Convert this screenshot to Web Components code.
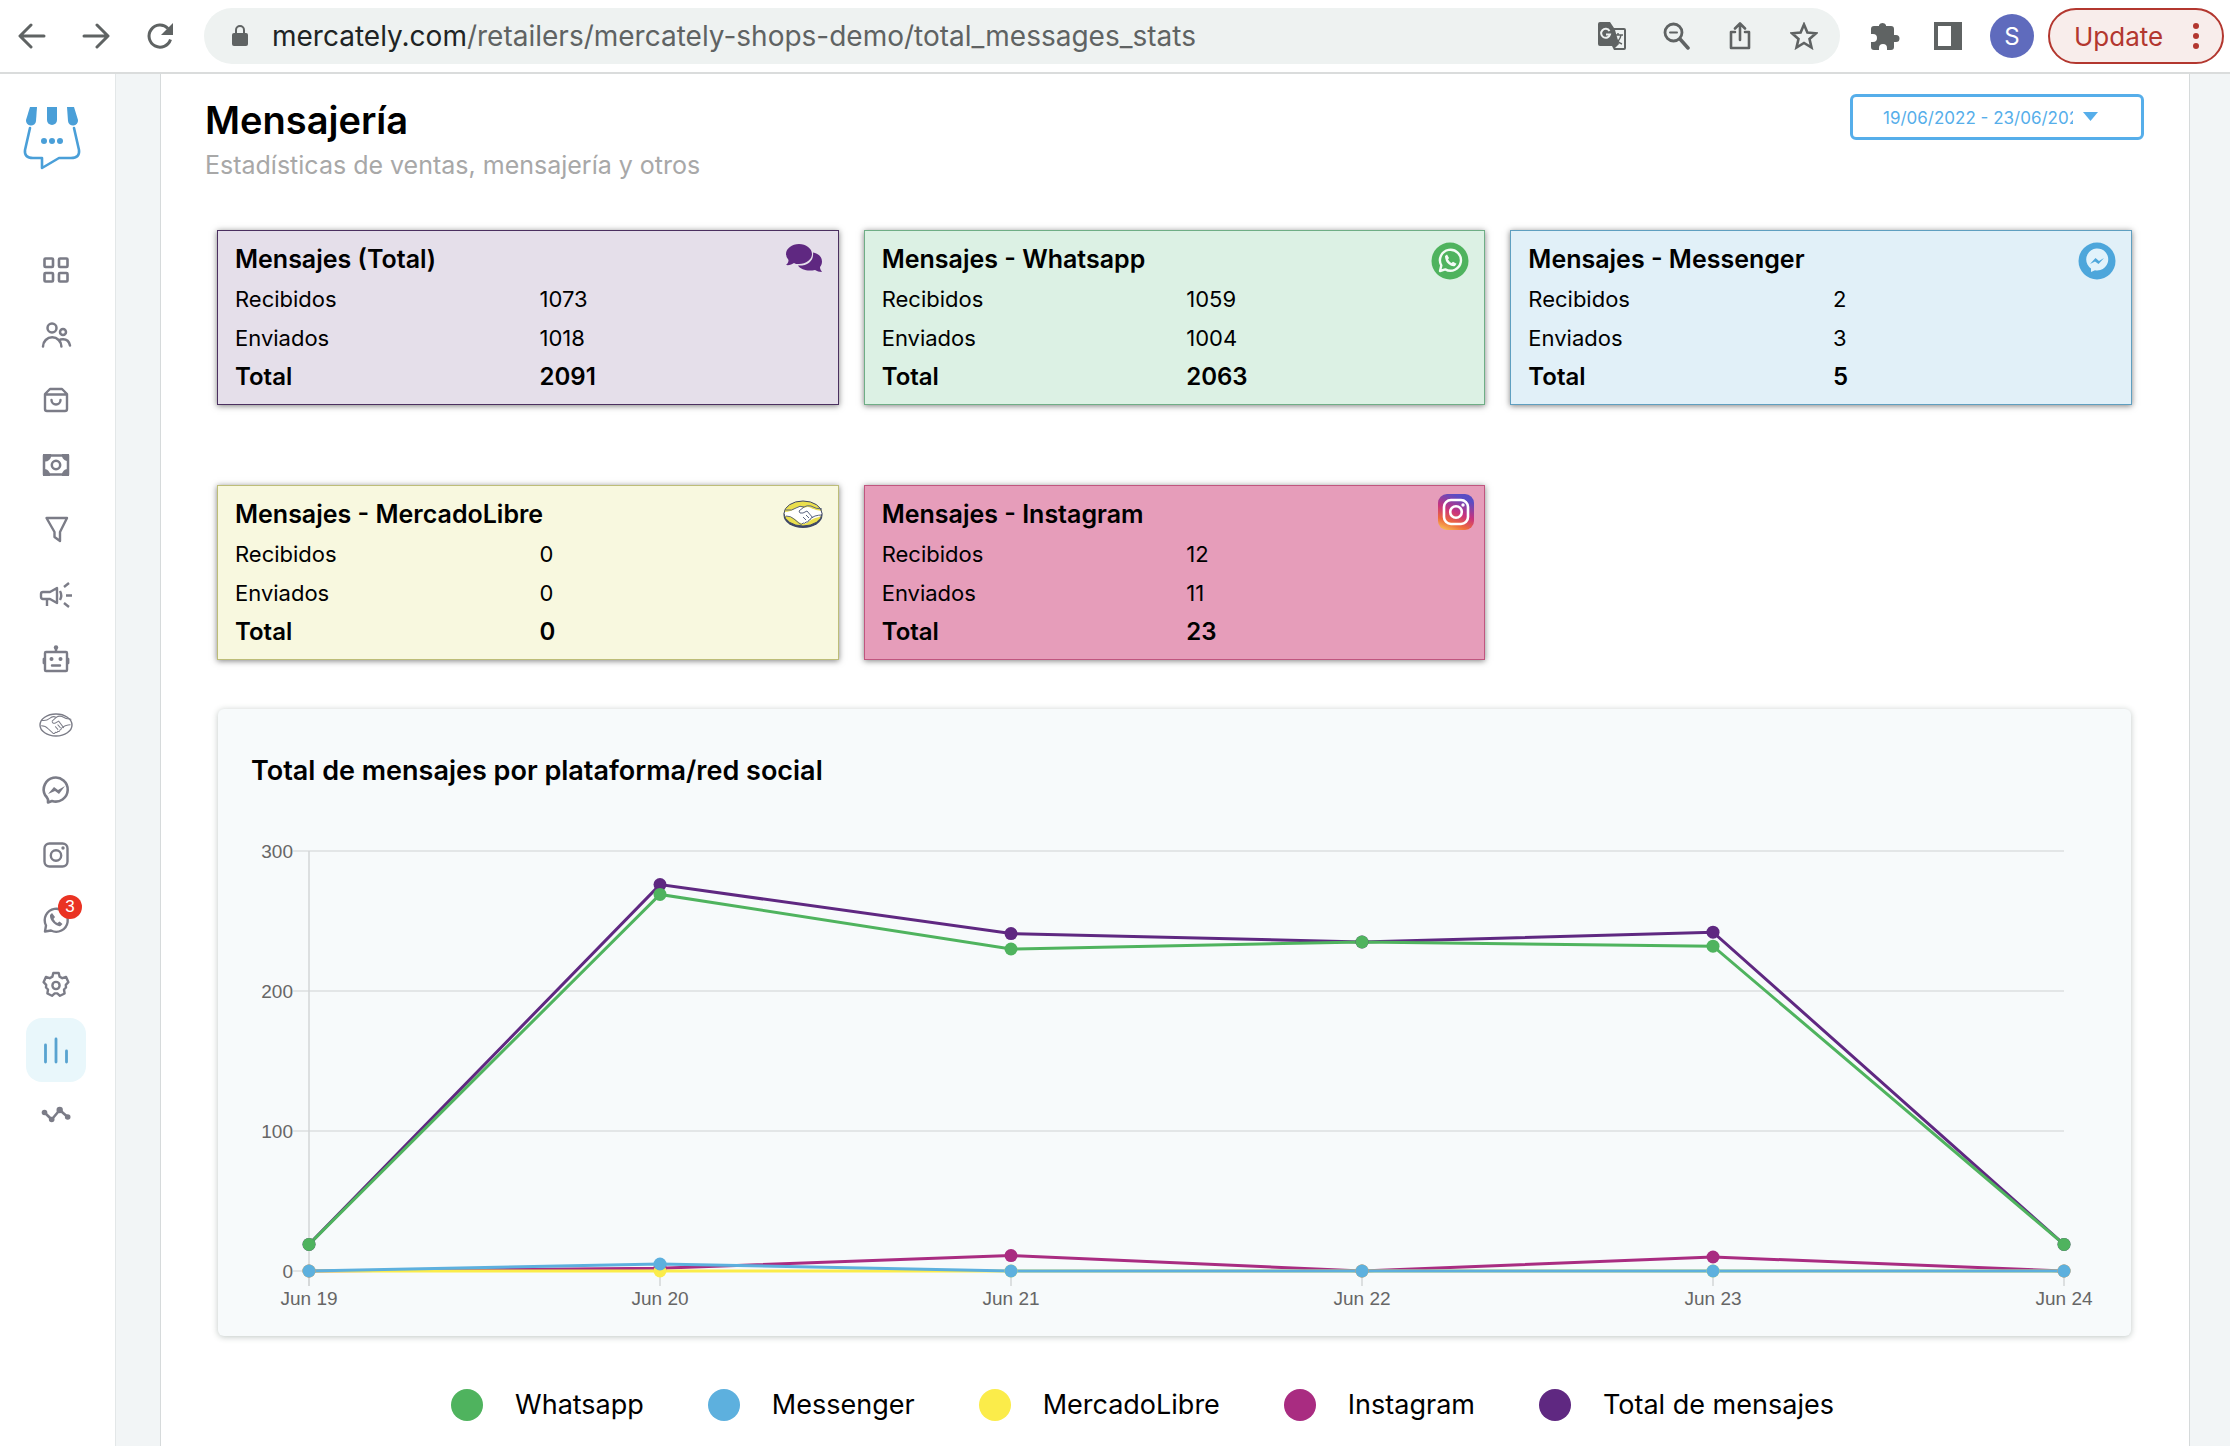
<!DOCTYPE html>
<html lang="es">
<head>
<meta charset="utf-8">
<title>Mensajería</title>
<style>
  body { margin: 0; background: #fff; color: #000; font-family: Inter, "Liberation Sans", sans-serif; }
</style>
</head>
<body>
<app-shell>
  <browser-bar slot="bar" host="mercately.com" path="/retailers/mercately-shops-demo/total_messages_stats"></browser-bar>
  <side-nav slot="nav"></side-nav>
  <page-header>
    <span slot="title">Mensajería</span>
    <span slot="subtitle">Estadísticas de ventas, mensajería y otros</span>
    <date-range slot="action" value="19/06/2022 - 23/06/2022"></date-range>
  </page-header>
  <card-grid>
    <stat-card tone="total" received="1073" sent="1018" total="2091">Mensajes (Total)</stat-card>
    <stat-card tone="whatsapp" received="1059" sent="1004" total="2063">Mensajes - Whatsapp</stat-card>
    <stat-card tone="messenger" received="2" sent="3" total="5">Mensajes - Messenger</stat-card>
    <stat-card tone="mercado" received="0" sent="0" total="0">Mensajes - MercadoLibre</stat-card>
    <stat-card tone="instagram" received="12" sent="11" total="23">Mensajes - Instagram</stat-card>
  </card-grid>
  <line-chart>Total de mensajes por plataforma/red social</line-chart>
  <chart-legend>
    <legend-item color="#4fb35e">Whatsapp</legend-item>
    <legend-item color="#5db0de">Messenger</legend-item>
    <legend-item color="#fbec4a">MercadoLibre</legend-item>
    <legend-item color="#a92c81">Instagram</legend-item>
    <legend-item color="#5f2881">Total de mensajes</legend-item>
  </chart-legend>
</app-shell>

<script>
const S = 'fill="none" stroke="currentColor" stroke-linecap="round" stroke-linejoin="round"';
const HANDS = `<path d="M3 12q6 1 10-2q4-3 8-1q3-2 7-1q5 3 11 3"/><path d="M3 18q5 0 8 3l6 5q2 1 3-1q2 1 3-1q2 1 3-2q2 0 2-2q2-1 4-2q4-1 6-1"/><path d="M21 9l-5 4q0 3 4 2l4-2l6 7M23 22l-3-3M26 20l-3-3"/>`;
const ICONS = {
  back: [28, 28, `<path ${S} stroke-width="3" d="M26 14H3M13 3L2 14l11 11"/>`],
  forward: [28, 28, `<path ${S} stroke-width="3" d="M2 14h23M15 3l11 11-11 11"/>`],
  reload: [28, 28, `<path fill="none" stroke="currentColor" stroke-width="3" d="M24.500 17.500A11 11 0 1 1 22 6.500"/><path fill="currentColor" d="M27 1v12H15z"/>`],
  lock: [20, 24, `<rect x="2" y="9" width="16" height="13" rx="2" fill="currentColor"/><path fill="none" stroke="currentColor" stroke-width="2" d="M6 10V6a4 4 0 0 1 8 0v4"/>`],
  translate: [28, 28, `<path fill="currentColor" d="M2 0h10l4 6h10a2 2 0 0 1 2 2v18a2 2 0 0 1-2 2H16l-2-4H2a2 2 0 0 1-2-2V2a2 2 0 0 1 2-2z"/><path fill="#eef2f1" d="M17 8h9v18h-9l4-4z"/><path fill="none" stroke="#eef2f1" stroke-width="2" d="M11.500 9A4.500 4.500 0 1 0 12 12.500H8"/><path fill="none" stroke="currentColor" stroke-width="1.500" d="M15 13h10M20 11v2M23 13q-1 6-7 9M17 15q2 5 7 7"/>`],
  zoomout: [28, 28, `<circle cx="11.500" cy="10.500" r="8.500" fill="none" stroke="currentColor" stroke-width="2.800"/><path ${S} stroke-width="2" d="M8 10.500h7"/><path ${S} stroke-width="3.500" d="M18 17l8 9"/>`],
  share: [28, 28, `<path ${S} stroke-width="2.600" d="M9 10H5v16h18V10h-4M14 18V2M9 6.500l5-5 5 5"/>`],
  star: [28, 28, `<path fill="none" stroke="currentColor" stroke-width="2.600" d="M14 2.500l3.400 8 8.600.8-6.500 5.700 2 8.500-7.500-4.500-7.500 4.500 2-8.500L2 11.300l8.600-.8z"/>`],
  puzzle: [30, 30, `<path fill="currentColor" d="M26 14h-2V8a3 3 0 0 0-3-3h-5V4a4 4 0 0 0-7 0v1H4a3 3 0 0 0-3 3v5h2a4 4 0 0 1 0 8H1v5a3 3 0 0 0 3 3h5v-2a4 4 0 0 1 8 0v2h4a3 3 0 0 0 3-3v-5h2a3.500 3.500 0 0 0 0-7z"/>`],
  panel: [28, 28, `<path fill="currentColor" fill-rule="evenodd" d="M0 0h28v28H0zM4 4v20h13V4z"/>`],
  dots: [6, 26, `<g fill="currentColor"><circle cx="3" cy="3" r="3"/><circle cx="3" cy="13" r="3"/><circle cx="3" cy="23" r="3"/></g>`],
  logo: [58, 64, `<g fill="#4a9fd8"><path d="M7 1h7l-1 14a4.800 4.800 0 0 1-10-1z"/><path d="M24 1h10v13a5 5 0 0 1-10 0z"/><path d="M44 1h7l4 13a4.800 4.800 0 0 1-10 1z"/><circle cx="21" cy="35" r="3"/><circle cx="29" cy="35" r="3"/><circle cx="37" cy="35" r="3"/></g><path fill="none" stroke="#4a9fd8" stroke-width="2.600" stroke-linecap="round" stroke-linejoin="round" d="M7 22L2 44q-1 8 8 8h9v10l17-10h12q9 0 8-8L51 22"/>`],
  grid: [36, 36, `<g ${S} stroke-width="2.600"><rect x="6.500" y="6.500" width="8.500" height="8.500" rx="1"/><rect x="21" y="6.500" width="8.500" height="8.500" rx="1"/><rect x="6.500" y="21" width="8.500" height="8.500" rx="1"/><rect x="21" y="21" width="8.500" height="8.500" rx="1"/></g>`],
  people: [36, 36, `<g ${S} stroke-width="2.500"><circle cx="14" cy="11" r="4.500"/><circle cx="25" cy="15" r="3"/><path d="M5 29.500a9.200 9.200 0 0 1 18.400 0M22.500 22.500q8-1.500 9.500 6"/></g>`],
  bag: [36, 36, `<g ${S} stroke-width="2.400"><path d="M7 12l5-5h12l5 5v15q0 2-2 2H9q-2 0-2-2zM7 12.500h22M13.500 18a4.500 4.500 0 0 0 9 0"/></g>`],
  money: [36, 36, `<rect x="6" y="8.500" width="24" height="19" ${S} stroke-width="2.500"/><path fill="currentColor" d="M5 7h8a6 6 0 0 1-8 7zM31 7v7a6 6 0 0 1-7-7zM5 29v-7a6 6 0 0 1 7 7zM31 29h-7a6 6 0 0 1 7-7z"/><circle cx="18" cy="18" r="4.200" ${S} stroke-width="2.500"/>`],
  funnel: [36, 36, `<path ${S} stroke-width="2.400" d="M8.500 6h20.500l-7 14v9l-5.500-4v-5z"/>`],
  horn: [36, 36, `<g fill="none" stroke="currentColor" stroke-width="2.400"><path stroke-linejoin="round" d="M19 11v15l-7-4H5q-2 0-2-2v-3q0-2 2-2h7zM9 22v7M22 14q2.500 4.500 0 9M26 10l5-4M28 18.500h6M26 26l5 4"/></g>`],
  robot: [36, 36, `<g ${S} stroke-width="2.400"><rect x="7" y="10" width="22" height="19" rx="1"/><path d="M18 9V6M5.800 17v4M30.200 17v4M14 23.500h8"/></g><g fill="currentColor"><circle cx="18" cy="5.500" r="2.200"/><circle cx="13.500" cy="17" r="2"/><circle cx="22.500" cy="17" r="2"/></g>`],
  hands: [36, 36, `<ellipse cx="18" cy="18" rx="16" ry="11" ${S} stroke-width="1.400"/><g transform="translate(1 2) scale(.82 .93)" ${S} stroke-width="1.100">${HANDS}</g>`],
  messenger: [36, 36, `<path ${S} stroke-width="2.600" d="M10 27.500v3l4-1.500a12 12 0 1 0-7-6q2 2 3 4.500z"/><path fill="currentColor" d="M10 22l6-7 4 3 7-4-6 8-4-3z"/>`],
  instagram: [36, 36, `<g ${S} stroke-width="2.400"><rect x="6.500" y="6.500" width="23" height="23" rx="5"/><circle cx="18" cy="18.500" r="5.200"/></g><circle cx="25" cy="11" r="1.700" fill="currentColor"/>`],
  whatsapp: [36, 36, `<path ${S} stroke-width="2.400" d="M7 29.500l1-6a11.500 11.500 0 1 1 5 5z"/><path fill="currentColor" d="M12 13l2-2 3 4-1.500 2q1.500 3 4 4l2-1.500 3 2.500-2 2q-3 1-7-3t-3.500-8z"/>`],
  gear: [36, 36, `<path ${S} stroke-width="2.400" d="M15.300 6h5.400l.9 3.600 2.700 1.600 3.800-1.200 2.300 5.200-2.600 2.700.2 2.600-2 2 .6 4-4.600 2.300-2.700-2.400h-2.600l-2.700 2.400-4.600-2.300.6-4-2-2 .2-2.600-2.600-2.700L7.900 10l3.800 1.200 2.700-1.600z"/><circle cx="18" cy="18.500" r="3.600" ${S} stroke-width="2.400"/>`],
  bars: [36, 36, `<path ${S} stroke-width="2.800" d="M7.500 13v17M18 7v23M28.500 19v11"/>`],
  trend: [36, 36, `<path ${S} stroke-width="2.600" d="M6.500 15.500l7.200 7 8-9.500 8 7"/><g fill="currentColor"><circle cx="6.500" cy="15.500" r="2.800"/><circle cx="13.700" cy="22.500" r="2.800"/><circle cx="21.700" cy="13" r="3.200"/><circle cx="29.700" cy="20" r="2.800"/></g>`],
  cTotal: [38, 38, `<g fill="#5f2881"><path d="M28 10.500c5 1 9 4 9 9 0 2.500-1 4.500-2 5.500 0 2 1 3.500 2 5-3 0-5-1-7-2-7 1.500-14 0-17-4.500 9 .5 16-4 15-13z"/><path d="M14 2c7 0 13 4.500 13 10s-6 10-13 10c-2 0-4 0-5-1-2 1.500-5 2.500-8 2 2-1.500 2.500-3.500 2.500-5Q1 15 1 12C1 6.500 7 2 14 2z"/></g>`],
  cWhatsapp: [38, 38, `<circle cx="19" cy="19" r="18.500" fill="#4fb35e"/><path fill="none" stroke="#f3fbf5" stroke-width="2.400" stroke-linejoin="round" d="M9 29l1.300-5.600a10.500 10.500 0 1 1 4 4z"/><path fill="#f3fbf5" d="M14 14l2-1.500 2 3.500-1 1.500q1.500 2.500 3.500 3.500l1.500-1.300 3.500 2-1.500 2.300q-3 1-6.500-2t-3.500-8z"/>`],
  cMessenger: [38, 38, `<circle cx="19" cy="19" r="18.500" fill="#4da6db"/><path fill="#e1f2fb" d="M13 30v-3.500a11 11 0 1 1 4 1.700z"/><path fill="#4da6db" d="M12 22l5.500-6 3.500 3 5-3-5.500 6-3.500-2.500z"/>`],
  cMercado: [40, 38, `<ellipse cx="20" cy="18" rx="19.500" ry="13" fill="#3d4666"/><g transform="translate(0 -2)"><ellipse cx="20" cy="18.500" rx="19" ry="12.500" fill="#eadf4e"/><path fill="#fff" d="M1 17q7 0 12-4 4-2 8 0 4-2 7 0 6 3 11 3 1 5-3 6-5 1-8 3-3 3-8 4-4-1-8-5-4-3-10-3z"/><g fill="none" stroke="#5b6580" stroke-width="1">${HANDS.replace(/d="/g, 'transform="translate(0 3)" d="')}</g><ellipse cx="20" cy="18.500" rx="19" ry="12.500" fill="none" stroke="#3d4666"/></g>`],
  cInstagram: [38, 38, `<defs><linearGradient id="g" x1="0" y1="1" x2=".4" y2="0"><stop offset="0" stop-color="#fbd05a"/><stop offset=".3" stop-color="#ee6a3c"/><stop offset=".6" stop-color="#c8327e"/><stop offset="1" stop-color="#5a4cc4"/></linearGradient></defs><rect x="1" y="1" width="36" height="36" rx="9" fill="url(#g)"/><g fill="none" stroke="#fff" stroke-width="2.600"><rect x="7" y="7" width="24" height="24" rx="7"/><circle cx="19" cy="19" r="5.800"/></g><circle cx="26" cy="12" r="1.700" fill="#fff"/>`],
};

function define(name, css, html, setup) {
  customElements.define(name, class extends HTMLElement {
    constructor() {
      super();
      this.attachShadow({ mode: 'open' });
    }
    connectedCallback() {
      this.shadowRoot.innerHTML = `<style>${css}</style>` + (typeof html === 'function' ? html(this) : html);
      if (setup) setup(this);
    }
  });
}

define('app-icon', `:host{display:inline-flex;flex:none} svg{display:block}`, el => {
  const [w, h, body] = ICONS[el.getAttribute('name')];
  return `<svg width="${w}" height="${h}" viewBox="0 0 ${w} ${h}" aria-hidden="true">${body}</svg>`;
});

define('app-shell', `
  :host{display:flex;flex-direction:column;min-height:100vh}
  .body{display:flex;flex:1}
  aside{flex:none;width:115px;border-right:1px solid #e3e7e8;background:#fff}
  .backdrop{flex:1;background:#f2f5f6;padding:0 40px 0 44px;display:flex}
  main{flex:1;min-width:0;box-sizing:border-box;background:#fff;border:solid #d6dadb;border-width:0 1px;padding:20px 45px 0 44px}
`, `<slot name="bar"></slot><div class="body"><aside><slot name="nav"></slot></aside><div class="backdrop"><main><slot></slot></main></div></div>`);

const btn = (n, label) => `<button aria-label="${label}"><app-icon name="${n}"></app-icon></button>`;
define('browser-bar', `
  :host{display:flex;align-items:center;height:72px;padding:0 6px 0 18px;border-bottom:2px solid #dadcdc;background:#fff;color:#5f6363}
  button{display:flex;border:0;padding:0;background:none;color:inherit;font:inherit}
  .group{display:flex;align-items:center;gap:36px}
  .omnibox{flex:1;display:flex;align-items:center;gap:22px;height:56px;box-sizing:border-box;margin:0 30px;padding:0 22px 0 26px;border-radius:28px;background:#eef2f1}
  .url{flex:1;font-size:28px;white-space:nowrap}
  .host{color:#202424}
  .end{display:flex;align-items:center;gap:14px}
  .tools{gap:34px;margin-right:14px}
  .avatar{width:44px;height:44px;border-radius:22px;background:#5f6bbd;color:#fff;font-size:24px;align-items:center;justify-content:center}
  .update{box-sizing:border-box;width:176px;height:56px;border:2px solid #b3372f;border-radius:28px;background:#f8edeb;color:#b3372f;font-size:26px;align-items:center;justify-content:space-between;padding:0 23px 0 24px}
`, el => `
  <div class="group">${btn('back', 'Back')}${btn('forward', 'Forward')}${btn('reload', 'Reload')}</div>
  <div class="omnibox"><app-icon name="lock"></app-icon>
    <div class="url"><span class="host">${el.getAttribute('host')}</span><span>${el.getAttribute('path')}</span></div>
    <div class="group">${btn('translate', 'Translate')}${btn('zoomout', 'Zoom')}${btn('share', 'Share')}${btn('star', 'Bookmark')}</div>
  </div>
  <div class="end"><div class="group tools">${btn('puzzle', 'Extensions')}${btn('panel', 'Side panel')}</div>
    <button class="avatar">S</button>
    <button class="update">Update<app-icon name="dots"></app-icon></button>
  </div>`);

define('side-nav', `
  :host{display:block;padding:32px 0 0}
  .logo{display:block;width:58px;height:64px;margin:0 0 68px 23px}
  nav{display:flex;flex-direction:column;gap:1px;padding-left:26px}
  nav a{position:relative;display:flex;align-items:center;justify-content:center;width:60px;height:64px;border-radius:16px;color:#7b7c87}
  nav a.active{background:#e9f7fb;color:#58a3d0}
  b{position:absolute;top:7px;right:4px;width:24px;height:24px;border-radius:12px;background:#ea3323;color:#fff;font:17px/24px "Liberation Sans",sans-serif;text-align:center}
`, () => `<a class="logo" href="#" aria-label="Inicio"><app-icon name="logo"></app-icon></a><nav>` +
  ['grid', 'people', 'bag', 'money', 'funnel', 'horn', 'robot', 'hands', 'messenger', 'instagram', 'whatsapp', 'gear', 'bars', 'trend']
    .map(n => `<a href="#${n}" aria-label="${n}"${n === 'bars' ? ' class="active"' : ''}><app-icon name="${n}"></app-icon>${n === 'whatsapp' ? '<b>3</b>' : ''}</a>`).join('') + `</nav>`);

define('page-header', `
  :host{display:flex;justify-content:space-between;align-items:flex-start}
  h1{margin:0;font-size:38px;line-height:53px;font-weight:600}
  p{margin:0;font-size:25px;line-height:36px;color:#a8a8a8}
`, `<div><h1><slot name="title"></slot></h1><p><slot name="subtitle"></slot></p></div><slot name="action"></slot>`);

define('date-range', `
  :host{display:flex;align-items:center;gap:10px;box-sizing:border-box;width:294px;height:46px;border:3px solid #56aeea;border-radius:6px;color:#56aeea;padding-left:30px}
  input{width:190px;border:0;padding:2px 0 0;background:none;color:inherit;font:17px/24px Inter,sans-serif;outline:0}
  svg{display:block;margin-bottom:2px}
`, el => `<input type="text" readonly aria-label="Rango de fechas" value="${el.getAttribute('value')}"><svg width="15" height="9"><path fill="currentColor" d="M0 0h15L7.500 9z"/></svg>`);

define('card-grid', `
  :host{display:grid;grid-template-columns:repeat(3,minmax(0,1fr));gap:80px 25px;margin:47px 12px 0}
`, `<slot></slot>`);

const TONES = {
  total: ['#e5dfea', '#4b3060', 'cTotal'],
  whatsapp: ['#dcf1e4', '#6fae86', 'cWhatsapp'],
  messenger: ['#e1f0f8', '#5f9fc0', 'cMessenger'],
  mercado: ['#f8f8df', '#bdbd78', 'cMercado'],
  instagram: ['#e69dba', '#c0567f', 'cInstagram'],
};
define('stat-card', `
  :host{display:flex;align-items:flex-start;position:relative;box-sizing:border-box;border:1px solid var(--edge);background:var(--fill);padding:9px 17px 8px;box-shadow:0 1px 6px rgba(0,0,0,.5)}
  table{width:100%;table-layout:fixed;border-collapse:collapse;font-size:22px;line-height:37px}
  caption{text-align:left;font-size:25px;line-height:39px;font-weight:600}
  th{width:52%} th,td{padding:2px 0 0;text-align:left;font-weight:400}
  .sum th,.sum td{padding:0;font-size:24px;line-height:39px;font-weight:600}
  app-icon{position:absolute;right:15px;top:11px}
  :host([tone="instagram"]) app-icon{right:9px;top:7px}
`, el => {
  const row = (l, a, c) => `<tr class="${c}"><th scope="row">${l}</th><td>${el.getAttribute(a)}</td></tr>`;
  return `<table><caption><slot></slot></caption><tbody>${row('Recibidos', 'received', '')}${row('Enviados', 'sent', '')}${row('Total', 'total', 'sum')}</tbody></table><app-icon name="${TONES[el.getAttribute('tone')][2]}"></app-icon>`;
}, el => {
  const t = TONES[el.getAttribute('tone')];
  el.style.setProperty('--fill', t[0]);
  el.style.setProperty('--edge', t[1]);
});

const SERIES = [
  ['#5f2881', [19, 276, 241, 235, 242, 19]],
  ['#a92c81', [0, 2, 11, 0, 10, 0]],
  ['#fbec4a', [0, 0, 0, 0, 0, 0]],
  ['#5db0de', [0, 5, 0, 0, 0, 0]],
  ['#4fb35e', [19, 269, 230, 235, 232, 19]],
];
define('line-chart', `
  :host{display:block;margin:49px 13px 0;border-radius:6px;background:#f7fafb;box-shadow:0 1px 6px rgba(60,80,70,.32);padding:42px 0 0;overflow:hidden}
  h2{margin:0;padding:0 33px;font-size:27px;line-height:40px;font-weight:600}
  svg{display:block;width:100%;height:auto}
  text{font:19px "Liberation Sans",sans-serif;fill:#666}
`, () => {
  const X = i => 91 + i * 351, Y = v => 480 - v * 1.4;
  let s = '';
  [0, 100, 200, 300].forEach(v => {
    s += `<path d="M75 ${Y(v)}H${X(5)}" stroke="#dcdfe0" stroke-width="1.500"/><text x="75" y="${Y(v) + 7}" text-anchor="end">${v}</text>`;
  });
  s += `<path d="M91 60V495" stroke="#d3d6d7" stroke-width="1.500"/>`;
  for (let i = 0; i < 6; i++) s += `<path d="M${X(i)} 480v15" stroke="#d3d6d7" stroke-width="1.500"/><text x="${X(i)}" y="514" text-anchor="middle">Jun ${19 + i}</text>`;
  SERIES.forEach(([c, d]) => { s += `<polyline fill="none" stroke="${c}" stroke-width="3" points="${d.map((v, i) => X(i) + ',' + Y(v)).join(' ')}"/>`; });
  SERIES.forEach(([c, d]) => { d.forEach((v, i) => { s += `<circle cx="${X(i)}" cy="${Y(v)}" r="6.500" fill="${c}"/>`; }); });
  return `<h2><slot></slot></h2><svg viewBox="0 0 1913 545" role="img" aria-label="Mensajes por día">${s}</svg>`;
});

define('chart-legend', `:host{display:flex;justify-content:center;margin-top:49px}`, `<slot></slot>`);
define('legend-item', `
  :host{display:flex;align-items:center;gap:32px;margin-right:64px;font-size:27px;line-height:40px;white-space:nowrap}
  i{width:32px;height:32px;border-radius:16px;background:var(--dot)}
`, `<i></i><span><slot></slot></span>`, el => el.style.setProperty('--dot', el.getAttribute('color')));
</script>
</body>
</html>
